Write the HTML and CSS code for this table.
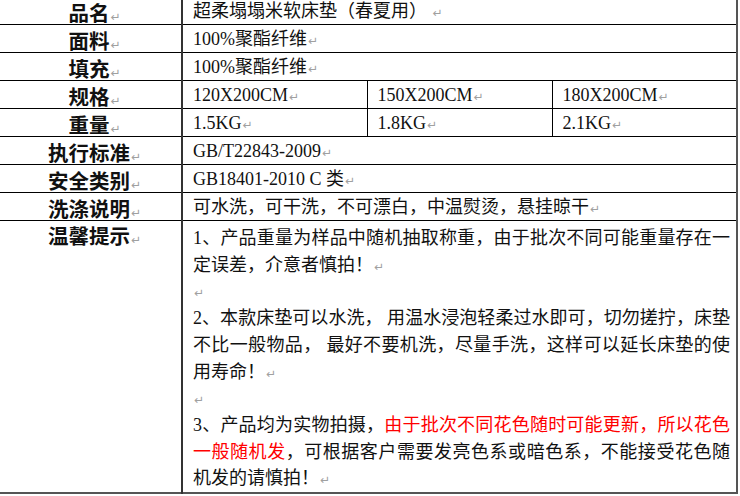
FILE: index.html
```html
<!DOCTYPE html>
<html lang="zh-CN">
<head>
<meta charset="utf-8">
<title>超柔塌塌米软床垫</title>
<link rel="stylesheet" href="styles.css">
</head>
<body>
<table class="spec">
  <colgroup>
    <col class="c1"><col class="c2"><col class="c3"><col class="c4">
  </colgroup>
  <tr class="row">
    <th class="label">品名<span class="pm">↵</span></th>
    <td class="val" colspan="3">超柔塌塌米软床垫（春夏用） <span class="pm">↵</span></td>
  </tr>
  <tr class="row">
    <th class="label">面料<span class="pm">↵</span></th>
    <td class="val" colspan="3">100%聚酯纤维<span class="pm">↵</span></td>
  </tr>
  <tr class="row">
    <th class="label">填充<span class="pm">↵</span></th>
    <td class="val" colspan="3">100%聚酯纤维<span class="pm">↵</span></td>
  </tr>
  <tr class="row">
    <th class="label">规格<span class="pm">↵</span></th>
    <td class="val">120X200CM<span class="pm">↵</span></td>
    <td class="val">150X200CM<span class="pm">↵</span></td>
    <td class="val">180X200CM<span class="pm">↵</span></td>
  </tr>
  <tr class="row">
    <th class="label">重量<span class="pm">↵</span></th>
    <td class="val">1.5KG<span class="pm">↵</span></td>
    <td class="val">1.8KG<span class="pm">↵</span></td>
    <td class="val">2.1KG<span class="pm">↵</span></td>
  </tr>
  <tr class="row">
    <th class="label">执行标准<span class="pm">↵</span></th>
    <td class="val" colspan="3">GB/T22843-2009<span class="pm">↵</span></td>
  </tr>
  <tr class="row">
    <th class="label">安全类别<span class="pm">↵</span></th>
    <td class="val" colspan="3">GB18401-2010 C 类<span class="pm">↵</span></td>
  </tr>
  <tr class="row">
    <th class="label">洗涤说明<span class="pm">↵</span></th>
    <td class="val" colspan="3">可水洗，可干洗，不可漂白，中温熨烫，悬挂晾干<span class="pm">↵</span></td>
  </tr>
  <tr class="last">
    <th class="label top">温馨提示<span class="pm">↵</span></th>
    <td class="notes" colspan="3">
      <p>1、产品重量为样品中随机抽取称重，由于批次不同可能重量存在一定误差，介意者慎拍！<span class="pm">↵</span></p>
      <p><span class="pm">↵</span></p>
      <p>2、本款床垫可以水洗， 用温水浸泡轻柔过水即可，切勿搓拧，床垫不比一般物品， 最好不要机洗，尽量手洗，这样可以延长床垫的使用寿命！<span class="pm">↵</span></p>
      <p><span class="pm">↵</span></p>
      <p>3、产品均为实物拍摄，<span class="red">由于批次不同花色随时可能更新，所以花色一般随机发</span>，可根据客户需要发亮色系或暗色系，不能接受花色随机发的请慎拍！<span class="pm">↵</span></p>
    </td>
  </tr>
</table>
</body>
</html>
```

FILE: styles.css
```css
html, body {
  margin: 0;
  padding: 0;
  background: #ffffff;
  overflow: hidden;
}

.spec {
  border-collapse: collapse;
  table-layout: fixed;
  width: 737px;
  margin-top: -4px;
  border-right: 2px solid #555555;
  border-bottom: 2px solid #555555;
  color: #111111;
  text-spacing-trim: space-all;
}

.c1 { width: 182px; }
.c2 { width: 185px; }
.c3 { width: 185px; }
.c4 { width: 185px; }

.row { height: 28px; }

.label {
  border-top: 1px solid #000000;
  border-bottom: 1px solid #000000;
  border-right: 2px solid #333333;
  padding: 2px 0 0 8px;
  text-align: center;
  vertical-align: middle;
  font-family: "Noto Sans CJK SC", sans-serif;
  font-weight: 700;
  font-size: 20.5px;
  line-height: 22px;
  white-space: nowrap;
}

.label.top {
  vertical-align: top;
  padding-top: 1px;
  line-height: 26.7px;
}

.val {
  border: 1px solid #000000;
  padding: 0 0 0 10px;
  text-align: left;
  vertical-align: middle;
  font-family: "Liberation Serif", "Noto Sans CJK SC", serif;
  font-size: 18px;
  line-height: 22px;
  white-space: nowrap;
  overflow: hidden;
}

.notes {
  border-top: 1px solid #000000;
  padding: 4px 6px 0 10px;
  vertical-align: top;
  font-family: "Liberation Serif", "Noto Sans CJK SC", serif;
  font-size: 18px;
  line-height: 26.7px;
  text-align: justify;
}

.notes p {
  margin: 0;
}

.red {
  color: #ff0000;
}

.pm {
  font-family: "DejaVu Sans", sans-serif;
  font-weight: 400;
  font-size: 12px;
  line-height: 10px;
  color: #a0a0a0;
  margin-left: 1px;
}
```
